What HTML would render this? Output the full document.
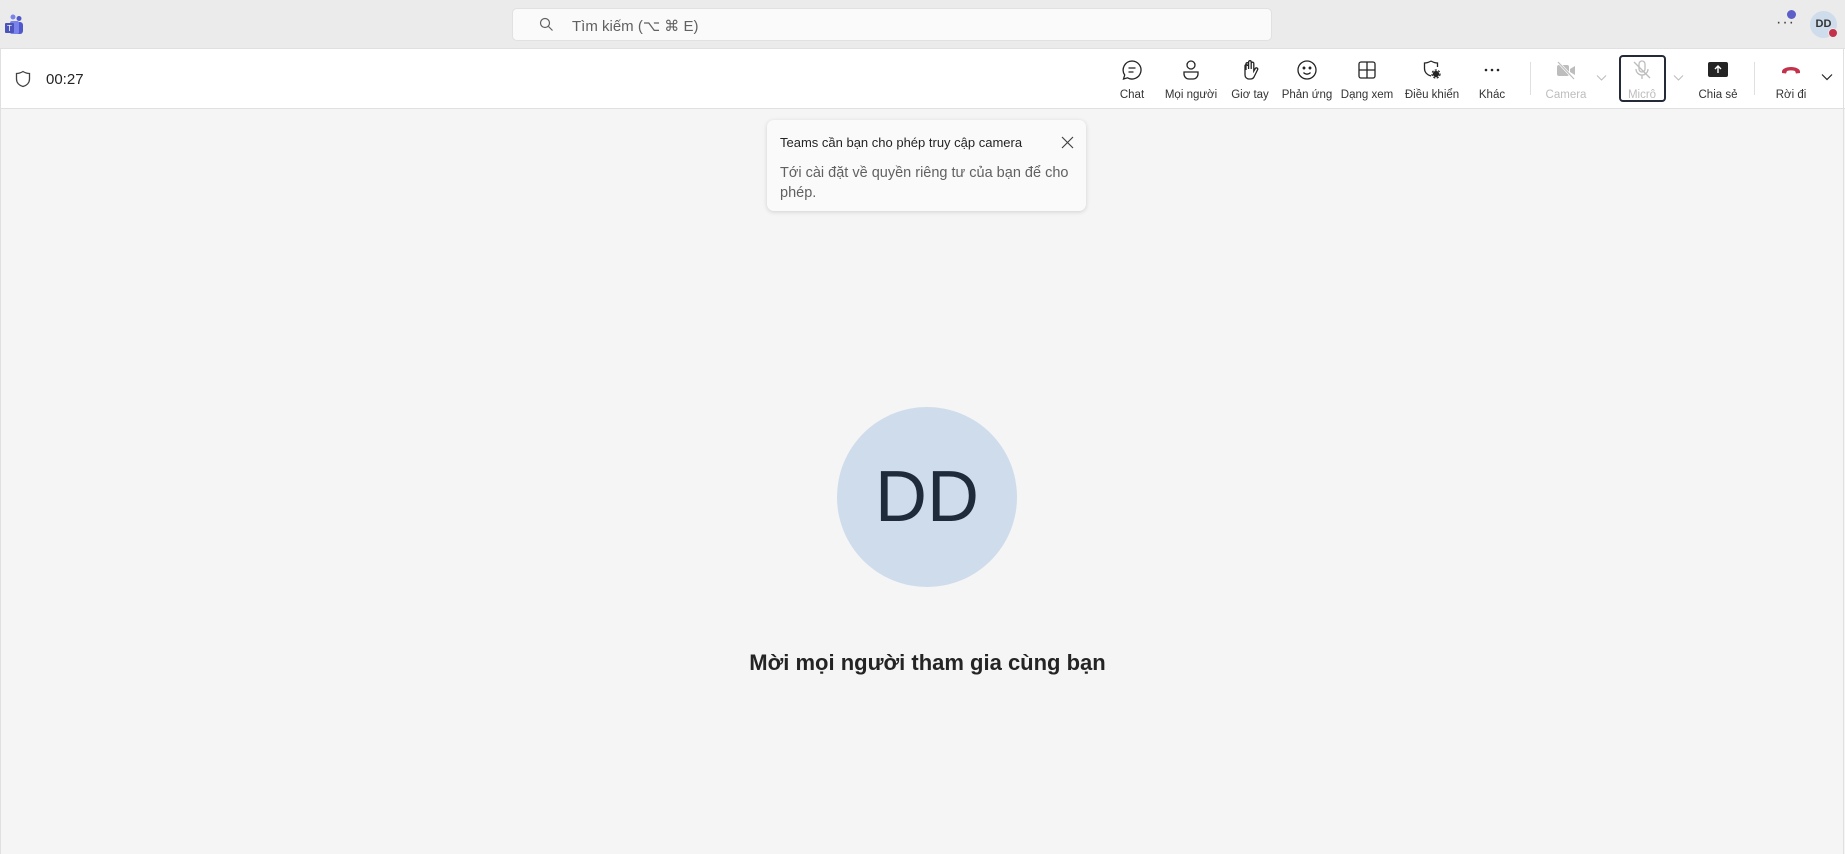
<!DOCTYPE html>
<html><head><meta charset="utf-8"><style>
*{box-sizing:border-box;margin:0;padding:0}
body{width:1845px;height:854px;overflow:hidden;background:#f5f5f5;font-family:"Liberation Sans",sans-serif;color:#242424;position:relative}
.top{position:absolute;left:0;top:0;width:1845px;height:49px;background:#ebebeb;border-bottom:1px solid #e0e0e0}
.search{position:absolute;left:512px;top:8px;width:760px;height:33px;background:#fafafa;border:1px solid #e1e1e1;border-radius:5px;font-size:15px;color:#616161}
.search span{position:absolute;left:59px;top:8px}
.bar{position:absolute;left:0;top:49px;width:1845px;height:60px;background:#fff;border-bottom:1px solid #e0e0e0}
.it{position:absolute;top:0;width:64px;margin-left:-32px;height:60px;text-align:center}
.it svg{position:absolute;left:21px;top:10px}
.it span{position:absolute;left:-10px;right:-10px;top:40px;font-size:11.5px;white-space:nowrap;color:#333}
.dis span{color:#bdbdbd}
.sep{position:absolute;top:13px;width:1px;height:33px;background:#e0e0e0}
.chev{position:absolute;top:25px}
.tip{position:absolute;left:767px;top:120px;width:319px;height:91px;background:#fafafa;border-radius:7px;box-shadow:0 1px 5px rgba(0,0,0,.15)}
.avatar{position:absolute;left:837px;top:407px;width:180px;height:180px;border-radius:50%;background:#cedcec;color:#1f2a3b;font-size:72px;text-align:center;line-height:180px}
h1{position:absolute;left:0;width:1855px;top:650px;text-align:center;font-size:22px;font-weight:bold;color:#242424}
</style></head><body>
<div class="top">
 <svg style="position:absolute;left:4px;top:14px" width="20" height="22" viewBox="0 0 20 22"><circle cx="9" cy="3" r="2.5" fill="#7b83eb"/><circle cx="15" cy="4.5" r="2.5" fill="#5059c9"/><rect x="9" y="8" width="10" height="12" rx="3" fill="#5059c9"/><rect x="6" y="7" width="9" height="13" rx="2" fill="#7b83eb"/><rect x="1" y="9" width="9" height="10" rx="1" fill="#4b53bc"/><text x="3" y="17" font-size="8" fill="#fff" font-family="Liberation Sans">T</text></svg>
 <div class="search"><svg style="position:absolute;left:26px;top:8px" width="15" height="15" viewBox="0 0 15 15"><circle cx="6" cy="6" r="4.5" fill="none" stroke="#616161" stroke-width="1.2"/><path d="M9.5 9.5L13.5 13.5" stroke="#616161" stroke-width="1.2"/></svg><span>Tìm kiếm (⌥ ⌘ E)</span></div>
 <div style="position:absolute;left:1776px;top:14px;font-size:16px;color:#424242;letter-spacing:1px">···</div>
 <div style="position:absolute;left:1787px;top:10px;width:9px;height:9px;border-radius:50%;background:#5b5fc7"></div>
 <div style="position:absolute;left:1810px;top:11px;width:27px;height:27px;border-radius:50%;background:#cedcec;font-size:11px;font-weight:bold;text-align:center;line-height:27px;color:#333">DD</div>
 <div style="position:absolute;left:1828px;top:28px;width:10px;height:10px;border-radius:50%;background:#c4314b;border:1px solid #ebebeb"></div>
</div>
<div class="bar">
 <svg style="position:absolute;left:15px;top:21px" width="16" height="18" viewBox="0 0 16 18"><path d="M8 1.5C5.5 3 3.5 3.5 1.5 3.5V9c0 4 3 6.5 6.5 7.5 3.5-1 6.5-3.5 6.5-7.5V3.5C12.5 3.5 10.5 3 8 1.5z" fill="none" stroke="#424242" stroke-width="1.3"/></svg>
 <div style="position:absolute;left:46px;top:22px;font-size:15px">00:27</div>

 <div class="it" style="left:1132px"><svg width="22" height="22" viewBox="0 0 22 22" fill="none" stroke="#242424" stroke-width="1.3"><path d="M11 2a9 9 0 1 1-4.5 16.8L2.5 20l1.2-4A9 9 0 0 1 11 2z"/><path d="M7.5 9h7M7.5 13h5"/></svg><span>Chat</span></div>
 <div class="it" style="left:1191px"><svg width="22" height="22" viewBox="0 0 22 22" fill="none" stroke="#242424" stroke-width="1.3"><circle cx="11" cy="6" r="4"/><path d="M4 13h14v2a5 5 0 0 1-5 5H9a5 5 0 0 1-5-5z"/></svg><span>Mọi người</span></div>
 <div class="it" style="left:1250px"><svg width="22" height="22" viewBox="0 0 22 22" fill="none" stroke="#242424" stroke-width="1.3"><path d="M7 11V5a1.3 1.3 0 0 1 2.6 0v5V3a1.3 1.3 0 0 1 2.6 0v7V4.5a1.3 1.3 0 0 1 2.6 0V12l1.5-2.5a1.3 1.3 0 0 1 2.2 1.4L15 18a4 4 0 0 1-3.5 2H10a4 4 0 0 1-4-4V7a1.3 1.3 0 0 1 2.6 0"/></svg><span>Giơ tay</span></div>
 <div class="it" style="left:1307px"><svg width="22" height="22" viewBox="0 0 22 22" fill="none" stroke="#242424" stroke-width="1.3"><circle cx="11" cy="11" r="9"/><circle cx="8" cy="9" r=".8" fill="#242424"/><circle cx="14" cy="9" r=".8" fill="#242424"/><path d="M7.5 13.5a4.5 4.5 0 0 0 7 0"/></svg><span>Phản ứng</span></div>
 <div class="it" style="left:1367px"><svg width="22" height="22" viewBox="0 0 22 22" fill="none" stroke="#242424" stroke-width="1.3"><rect x="3" y="3" width="16" height="16" rx="2"/><path d="M11 3v16M3 11h16"/></svg><span>Dạng xem</span></div>
 <div class="it" style="left:1432px"><svg width="22" height="22" viewBox="0 0 22 22" fill="none" stroke="#242424" stroke-width="1.3"><path d="M10 2C7.5 3.5 5.5 4 3.5 4v5.5c0 4 3 6.5 6.5 7.5"/><path d="M10 2c2.5 1.5 4.5 2 6.5 2v4"/><circle cx="15" cy="15" r="2.5" fill="#242424"/><circle cx="15" cy="15" r="4" stroke-dasharray="2 1.5"/></svg><span>Điều khiển</span></div>
 <div class="it" style="left:1492px"><svg width="22" height="22" viewBox="0 0 22 22" fill="#242424"><circle cx="5" cy="11" r="1.3"/><circle cx="11" cy="11" r="1.3"/><circle cx="17" cy="11" r="1.3"/></svg><span>Khác</span></div>
 <div class="sep" style="left:1530px"></div>
 <div class="it dis" style="left:1566px"><svg width="22" height="22" viewBox="0 0 22 22"><rect x="2" y="6" width="12" height="11" rx="2" fill="#bdbdbd"/><path d="M15 10l5-3v9l-5-3z" fill="#bdbdbd"/><path d="M3 3l16 17" stroke="#fff" stroke-width="2.5"/><path d="M3 3l16 17" stroke="#bdbdbd" stroke-width="1.2"/></svg><span>Camera</span></div>
 <svg class="chev" style="left:1596px" width="11" height="8" viewBox="0 0 11 8"><path d="M1 1.5l4.5 4.5 4.5-4.5" fill="none" stroke="#bdbdbd" stroke-width="1.1"/></svg>
 <div style="position:absolute;left:1619px;top:6px;width:47px;height:47px;border:2px solid #242a38;border-radius:4px"></div>
 <div class="it dis" style="left:1642px"><svg width="22" height="22" viewBox="0 0 22 22" fill="none" stroke="#bdbdbd" stroke-width="1.3"><rect x="8" y="2" width="6" height="11" rx="3"/><path d="M5 10a6 6 0 0 0 12 0M11 16v4M3 3l16 16"/></svg><span>Micrô</span></div>
 <svg class="chev" style="left:1673px" width="11" height="8" viewBox="0 0 11 8"><path d="M1 1.5l4.5 4.5 4.5-4.5" fill="none" stroke="#bdbdbd" stroke-width="1.1"/></svg>
 <div class="it" style="left:1718px"><svg width="22" height="22" viewBox="0 0 22 22"><rect x="1" y="3" width="20" height="15" rx="2" fill="#242424"/><path d="M11 14V7M8 10l3-3 3 3" fill="none" stroke="#fff" stroke-width="1.4"/></svg><span>Chia sẻ</span></div>
 <div class="sep" style="left:1754px"></div>
 <div class="it" style="left:1791px"><svg width="22" height="22" viewBox="0 0 22 22"><path d="M2 12.5c0-2.5 4-4.5 9-4.5s9 2 9 4.5v1.5l-4 .5-1-2.5c-2.5-.8-5.5-.8-8 0l-1 2.5-4-.5z" fill="#c4314b"/></svg><span>Rời đi</span></div>
 <svg class="chev" style="left:1821px;top:24px" width="12" height="8" viewBox="0 0 12 8"><path d="M1 1.5l5 5 5-5" fill="none" stroke="#242424" stroke-width="1.2"/></svg>
</div>
<div class="tip">
 <div style="position:absolute;left:13px;top:15px;font-size:13px;color:#242424">Teams cần bạn cho phép truy cập camera</div>
 <svg style="position:absolute;left:294px;top:16px" width="13" height="13" viewBox="0 0 13 13"><path d="M1 1l11 11M12 1L1 12" stroke="#424242" stroke-width="1.2"/></svg>
 <div style="position:absolute;left:13px;top:43px;width:300px;font-size:14.5px;line-height:20px;color:#616161">Tới cài đặt về quyền riêng tư của bạn để cho phép.</div>
</div>
<div class="avatar">DD</div>
<h1>Mời mọi người tham gia cùng bạn</h1>
<div style="position:absolute;left:1843px;top:49px;width:1px;height:805px;background:#e0e0e0"></div>
<div style="position:absolute;left:0;top:49px;width:1px;height:805px;background:#e0e0e0"></div>
</body></html>
